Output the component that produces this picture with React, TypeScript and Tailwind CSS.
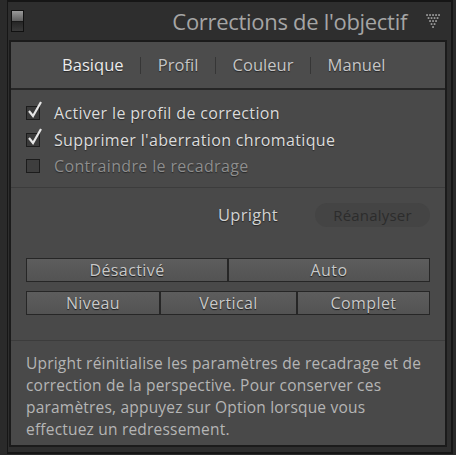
import React from "react";

const font = { fontFamily: '"Open Sans", "Noto Sans", sans-serif' };

function Toggle() {
  return (
    <div className="w-[13px] h-[22px] border border-[#111] flex flex-col bg-[#2c2c2c]">
      <div className="h-[10px] bg-gradient-to-b from-[#9a9a9a] to-[#5e5e5e]" />
      <div className="flex-1 bg-gradient-to-b from-[#262626] to-[#3a3a3a] border-t border-[#1a1a1a]" />
    </div>
  );
}

function Dots() {
  const dots: { x: number; y: number }[] = [];
  for (let r = 0; r < 5; r++) {
    for (let c = 0; c < 5 - r; c++) {
      dots.push({ x: 1 + r * 1.5 + c * 3, y: 1 + r * 3 });
    }
  }
  return (
    <svg width="15" height="15" viewBox="0 0 15 15">
      {dots.map((d, i) => (
        <rect key={i} x={d.x - 0.8} y={d.y - 0.8} width="1.7" height="1.7" fill="#a2a2a2" />
      ))}
    </svg>
  );
}

function Check({ checked, dim }: { checked: boolean; dim?: boolean }) {
  return (
    <div className="relative w-[14px] h-[14px] shrink-0">
      <div
        className={
          "w-[14px] h-[14px] border border-[#1c1c1c] " +
          (dim ? "bg-[#3e3e3e]" : "bg-[#3a3a3a]")
        }
      />
      {checked && (
        <svg
          className="absolute left-[1px] top-[-6px]"
          width="16"
          height="19"
          viewBox="0 0 16 19"
        >
          <path
            d="M2 11 L6 16 L14 2"
            fill="none"
            stroke="#e6e6e6"
            strokeWidth="2.2"
            strokeLinejoin="miter"
          />
        </svg>
      )}
    </div>
  );
}

function Row({ label, checked, dim }: { label: string; checked: boolean; dim?: boolean }) {
  return (
    <div className="h-[26.5px] flex items-center gap-[14px]">
      <Check checked={checked} dim={dim} />
      <span
        className={
          "text-[16px] tracking-[0.35px] leading-none whitespace-nowrap [text-shadow:0_1px_1px_rgba(0,0,0,0.45)] " +
          (dim ? "text-[#8e8e8e]" : "text-[#dcdcdc]")
        }
      >
        {label}
      </span>
    </div>
  );
}

function Btn({ label }: { label: string }) {
  return (
    <div className="h-[24px] border border-[#262626] bg-gradient-to-b from-[#5d5d5d] to-[#535353] flex items-center justify-center text-[16px] tracking-[0.4px] text-[#c9c9c9] leading-none [text-shadow:0_1px_1px_rgba(0,0,0,0.7)]">
      {label}
    </div>
  );
}

export default function App() {
  return (
    <div
      className="w-[456px] h-[455px] bg-[#2a2a2a] flex pl-[7px] pr-[3px] pb-[1px]"
      style={font}
    >
      <div className="flex-1 flex flex-col border-l border-t-2 border-r-2 border-b-2 border-[#161616] bg-[#2e2e2e]">
        {/* header */}
        <div className="h-[38px] shrink-0 flex items-center justify-between pl-[3px] pr-[10px]">
          <Toggle />
          <div className="flex items-center gap-[19px]">
            <span className="text-[22px] leading-none text-[#a5a5a5] tracking-[-0.3px]">
              Corrections de l'objectif
            </span>
            <Dots />
          </div>
        </div>
        {/* content */}
        <div className="flex-1 ml-[1px] mr-[4px] mb-[5px] border-2 border-[#1b1b1b] bg-[#494949] flex flex-col">
          <div className="h-[48px] shrink-0 bg-[#4c4c4c] border-b-2 border-[#262626] flex items-center pl-[51px] gap-[16.5px] text-[16.5px] tracking-[0.05px] leading-none">
            <span className="text-[#ececec] [text-shadow:0_1px_1px_rgba(0,0,0,0.5)]">Basique</span>
            <span className="w-px h-[17px] bg-[#363636]" />
            <span className="text-[#c6c6c6] [text-shadow:0_1px_1px_rgba(0,0,0,0.5)]">Profil</span>
            <span className="w-px h-[17px] bg-[#363636]" />
            <span className="text-[#c6c6c6] [text-shadow:0_1px_1px_rgba(0,0,0,0.5)]">Couleur</span>
            <span className="w-px h-[17px] bg-[#363636]" />
            <span className="text-[#c6c6c6] [text-shadow:0_1px_1px_rgba(0,0,0,0.5)]">Manuel</span>
          </div>
          <div className="h-[98px] shrink-0 pt-[10px] px-[15px] border-b border-[#3c3c3c]">
            <Row label="Activer le profil de correction" checked />
            <Row label="Supprimer l'aberration chromatique" checked />
            <Row label="Contraindre le recadrage" checked={false} dim />
          </div>
          <div className="h-[153px] shrink-0 pt-[15px] px-[15px] border-b border-[#3c3c3c] flex flex-col">
            <div className="h-[24px] flex items-center justify-end">
              <span className="text-[16.5px] tracking-[0.3px] leading-none text-[#d2d2d2] [text-shadow:0_1px_1px_rgba(0,0,0,0.5)]">
                Upright
              </span>
              <div className="ml-[37px] w-[115px] h-[24px] rounded-full bg-[#444444] flex items-center justify-center text-[15px] tracking-[0.2px] leading-none text-[#2c2c2c]">
                Réanalyser
              </div>
            </div>
            <div className="mt-[31px] grid grid-cols-2">
              <Btn label="Désactivé" />
              <Btn label="Auto" />
            </div>
            <div className="mt-[9px] grid grid-cols-[134px_137px_1fr]">
              <Btn label="Niveau" />
              <Btn label="Vertical" />
              <Btn label="Complet" />
            </div>
          </div>
          <div className="flex-1 pt-[11px] pl-[15px] text-[15.5px] tracking-[0.2px] leading-[22px] text-[#b5b5b5] whitespace-nowrap">
            Upright réinitialise les paramètres de recadrage et de
            <br />
            correction de la perspective. Pour conserver ces
            <br />
            paramètres, appuyez sur Option lorsque vous
            <br />
            effectuez un redressement.
          </div>
        </div>
      </div>
    </div>
  );
}
